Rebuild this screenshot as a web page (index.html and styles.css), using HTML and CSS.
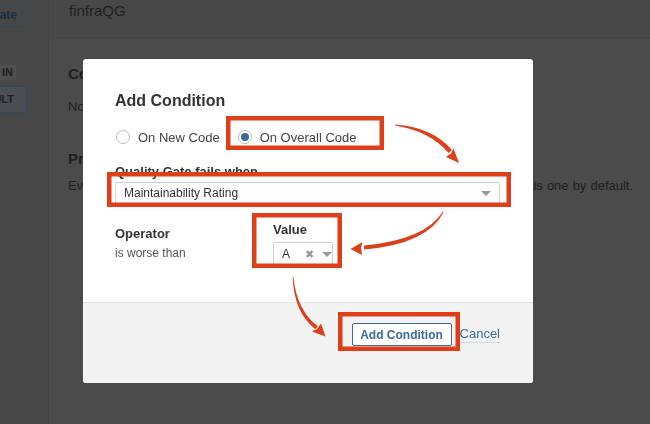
FILE: index.html
```html
<!DOCTYPE html>
<html>
<head>
<meta charset="utf-8">
<link rel="stylesheet" href="styles.css">
</head>
<body>
<div class="app">
  <aside class="sidebar">
    <div class="create-btn">Create</div>
    <div class="badge-in">BUILT IN</div>
    <div class="badge-lt">DEFAULT</div>
  </aside>
  <main class="main">
    <header class="header">finfraQG</header>
    <section class="content">
      <h3 class="sec-title">Conditions</h3>
      <p class="sec-text">No Conditions</p>
      <h3 class="sec-title sec-gap">Projects</h3>
      <p class="sec-text">Every project not specifically associated to a quality gate will be associated to this one by default.</p>
    </section>
  </main>
</div>

<div class="backdrop">
  <div class="modal">
    <div class="modal-body">
      <h2 class="modal-title">Add Condition</h2>
      <div class="radios">
        <label class="radio"><span class="dot"></span>On New Code</label>
        <label class="radio radio-on"><span class="dot dot-on"></span>On Overall Code</label>
      </div>
      <div class="field-label">Quality Gate fails when</div>
      <div class="select select-wide">
        <span>Maintainability Rating</span>
        <span class="caret"></span>
      </div>
      <div class="cond-row">
        <div class="op-col">
          <div class="field-label tight">Operator</div>
          <div class="op-text">is worse than</div>
        </div>
        <div class="val-col">
          <div class="field-label tight">Value</div>
          <div class="select select-small">
            <span>A</span>
            <span class="clear">&#x2716;</span>
            <span class="caret"></span>
          </div>
        </div>
      </div>
    </div>
    <div class="modal-footer">
      <button class="btn">Add Condition</button>
      <a class="cancel">Cancel</a>
    </div>
  </div>
</div>

<svg class="annot" width="650" height="424" viewBox="0 0 650 424">
  <g fill="none" stroke="#de3f19" stroke-width="4.5">
    <rect x="228.25" y="118.25" width="153.5" height="29.5"/>
    <rect x="109.25" y="174.25" width="399.5" height="30.5"/>
    <rect x="254.25" y="215.25" width="85.5" height="50.5"/>
    <rect x="340.25" y="314.25" width="117.5" height="34.5"/>
  </g>
  <g fill="#de3f19">
    <path d="M395,124.5 Q432,127 452,150 L448.5,153 Q430,131 395,125.5 Z"/>
    <path d="M459,163 L446,157 L451,153.5 L453.5,148.5 Z"/>
    <path d="M443,211.5 Q425,240 364,245.5 L364,249.5 Q428,244 443.6,212 Z"/>
    <path d="M350.5,249 L362.5,242 L361,247.5 L362,255 Z"/>
    <path d="M292.6,277 Q294,312 315,329 L318,326.5 Q297,311 293.4,277 Z"/>
    <path d="M325.5,336.5 L312,331.5 L317,329 L321,323.5 Z"/>
  </g>
</svg>
</body>
</html>
```
FILE: styles.css
```css
* { box-sizing: border-box; }
html, body {
  margin: 0;
  padding: 0;
  width: 650px;
  height: 424px;
  overflow: hidden;
  font-family: "Liberation Sans", Arial, Helvetica, sans-serif;
  background: #4b4b4b;
}
.app {
  display: flex;
  width: 650px;
  height: 424px;
}
.sidebar {
  width: 49px;
  flex: none;
  background: #474747;
  border-right: 1px solid #444;
  position: relative;
  overflow: hidden;
}
.create-btn {
  margin: 4px 0 0 -22px;
  width: 49px;
  height: 23px;
  border: 1px solid #30495f;
  border-radius: 2px;
  color: #1b2f40;
  font-weight: bold;
  font-size: 12px;
  line-height: 21px;
  text-align: right;
  padding-right: 9px;
}
.badge-in {
  margin: 38px 0 0 -46px;
  width: 62px;
  height: 15px;
  background: #4f4f4f;
  color: #1e1e1e;
  font-weight: bold;
  font-size: 11px;
  line-height: 15px;
  text-align: right;
  padding-right: 3px;
}
.badge-lt {
  margin: 6px 0 0 -45px;
  width: 72px;
  height: 27px;
  border: 1px solid #30495f;
  background: #4a4d52;
  color: #1e1e1e;
  font-weight: bold;
  font-size: 11px;
  line-height: 25px;
  text-align: right;
  padding-right: 12px;
}
.main {
  flex: 1;
  display: flex;
  flex-direction: column;
}
.header {
  height: 39px;
  background: #484848;
  border-bottom: 1px solid #464646;
  padding: 2px 0 0 20px;
  font-size: 15px;
  color: #202020;
}
.content {
  padding: 26px 0 0 19px;
  background: #4b4b4b;
  flex: 1;
}
.sec-title {
  margin: 0;
  font-size: 15px;
  font-weight: bold;
  line-height: 18px;
  color: #202020;
}
.sec-gap { margin-top: 35px; }
.sec-text {
  margin: 16px 0 0;
  font-size: 13px;
  line-height: 16px;
  color: #202020;
  white-space: nowrap;
  word-spacing: 0.45px;
}
.sec-title.sec-gap + .sec-text { margin-top: 10px; }

.backdrop {
  position: fixed;
  inset: 0;
  padding: 59px 0 0 83px;
}
.modal {
  width: 450px;
  background: #fff;
  border-radius: 3px;
  overflow: hidden;
}
.modal-body {
  height: 243px;
  padding: 32px 33px 0 32px;
}
.modal-title {
  margin: 0;
  font-size: 16px;
  line-height: 20px;
  font-weight: bold;
  color: #333;
}
.radios {
  margin-top: 16px;
  display: flex;
  align-items: center;
  height: 20px;
}
.radio {
  display: flex;
  align-items: center;
  font-size: 13px;
  color: #444;
  margin-left: 1px;
}
.radio-on { margin-left: 18px; }
.dot {
  width: 14px;
  height: 14px;
  border: 1px solid #bdbdbd;
  border-radius: 50%;
  margin-right: 8px;
  background: #fff;
  display: flex;
  align-items: center;
  justify-content: center;
}
.dot-on::after {
  content: "";
  width: 8px;
  height: 8px;
  border-radius: 50%;
  background: #3a6b9b;
}
.field-label {
  margin-top: 17px;
  font-size: 13px;
  line-height: 16px;
  font-weight: bold;
  color: #333;
}
.field-label.tight { margin-top: 0; }
.select {
  display: flex;
  align-items: center;
  border: 1px solid #cfcfcf;
  border-radius: 2px;
  background: #fff;
  font-size: 12px;
  color: #333;
}
.select-wide {
  margin-top: 2px;
  height: 22px;
  padding: 0 8px 0 8px;
}
.select-wide span:first-child { flex: 1; }
.caret {
  width: 0;
  height: 0;
  border-left: 5px solid transparent;
  border-right: 5px solid transparent;
  border-top: 5px solid #999;
  margin-top: 1px;
}
.cond-row {
  margin-top: 18px;
  display: flex;
  align-items: flex-start;
}
.op-col {
  width: 158px;
  padding-top: 4px;
}
.op-text {
  margin-top: 3px;
  font-size: 12px;
  line-height: 16px;
  color: #555;
}
.select-small {
  margin-top: 4px;
  width: 60px;
  height: 24px;
  padding: 0 0 0 8px;
}
.select-small .clear {
  margin-left: 15px;
  font-size: 11px;
  color: #999;
  width: 11px;
}
.select-small .caret { margin-left: 6px; }
.modal-footer {
  height: 81px;
  background: #f3f3f3;
  border-top: 1px solid #e4e4e4;
  display: flex;
  align-items: flex-start;
  justify-content: flex-end;
  padding: 20px 33px 0 0;
}
.btn {
  height: 23px;
  width: 100px;
  padding: 0;
  border: 1px solid #3a6b9b;
  border-radius: 2px;
  background: #fff;
  color: #3a6b9b;
  font-family: "Liberation Sans", Arial, sans-serif;
  font-weight: bold;
  font-size: 12px;
}
.cancel {
  margin-left: 8px;
  margin-top: 3px;
  font-size: 13px;
  line-height: 16px;
  color: #3a6b9b;
  border-bottom: 1px solid #c7d9ea;
}
.annot {
  position: fixed;
  left: 0;
  top: 0;
  pointer-events: none;
}
```
